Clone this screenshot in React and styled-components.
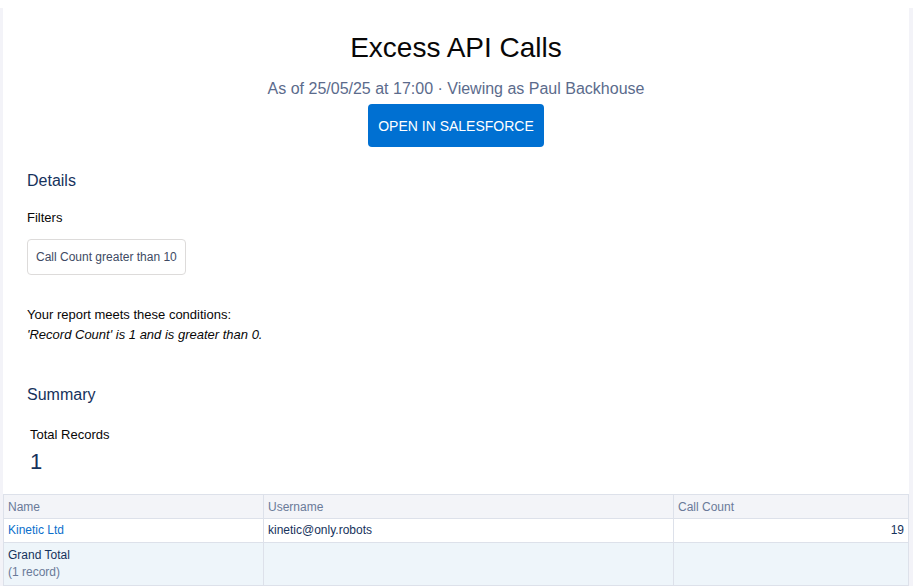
import React from 'react';
import styled, { createGlobalStyle } from 'styled-components';

const GlobalStyle = createGlobalStyle`
  html, body {
    margin: 0;
    padding: 0;
    background: #ffffff;
    font-family: "Liberation Sans", Arial, sans-serif;
  }
`;

const Page = styled.div`
  margin-top: 8px;
  background: #f3f3f8;
  padding: 0 4px 0 3px;
`;

const Card = styled.div`
  background: #ffffff;
  padding-top: 22px;
`;

const Header = styled.div`
  display: flex;
  flex-direction: column;
  align-items: center;
`;

const Title = styled.h1`
  margin: 0;
  font-size: 28px;
  font-weight: 400;
  color: #080707;
  line-height: 36px;
`;

const Subtitle = styled.div`
  margin-top: 13px;
  font-size: 16px;
  color: #5b6b8c;
  line-height: 20px;
`;

const Button = styled.a`
  margin-top: 5px;
  display: flex;
  align-items: center;
  justify-content: center;
  width: 176px;
  height: 43px;
  border-radius: 4px;
  background: #0070d2;
  color: #ffffff;
  font-size: 14px;
  text-transform: uppercase;
  text-decoration: none;
`;

const Section = styled.div`
  padding: 0 24px;
`;

const SectionTitle = styled.h2`
  margin: ${(p) => p.$top} 0 0 0;
  font-size: 16px;
  font-weight: 400;
  color: #16325c;
  line-height: 20px;
`;

const Label = styled.div`
  margin-top: 19px;
  font-size: 13px;
  color: #080707;
`;

const FilterBox = styled.div`
  display: inline-block;
  margin-top: 14px;
  padding: 10px 8px 10px;
  border: 1px solid #dddbda;
  border-radius: 4px;
  font-size: 12px;
  color: #3e4a63;
  line-height: 14px;
`;

const Conditions = styled.div`
  margin-top: 30px;
  font-size: 13px;
  color: #080707;
  line-height: 20px;

  em {
    display: block;
  }
`;

const Stat = styled.div`
  padding: 0 3px;
  margin-top: 22px;
`;

const StatLabel = styled.div`
  font-size: 13px;
  color: #080707;
  line-height: 16px;
`;

const StatValue = styled.div`
  margin-top: 6px;
  font-size: 22px;
  color: #16325c;
  line-height: 26px;
`;

const Table = styled.table`
  margin-top: 19px;
  width: 100%;
  border-collapse: collapse;
  font-size: 12px;
  border: 1px solid #dde1ea;
`;

const Th = styled.th`
  text-align: left;
  font-weight: 400;
  color: #6a7a99;
  background: #f3f4f8;
  padding: 0 4px;
  height: 23px;
  border: 1px solid #dde1ea;
`;

const Td = styled.td`
  padding: ${(p) => (p.$tall ? '4px' : '0 4px')};
  height: ${(p) => (p.$tall ? '33px' : '23px')};
  border: 1px solid #dde1ea;
  color: #16325c;
  text-align: ${(p) => (p.$right ? 'right' : 'left')};
  vertical-align: ${(p) => (p.$tall ? 'top' : 'middle')};
  line-height: 17px;
`;

const Row = styled.tr`
  background: ${(p) => (p.$total ? '#eef5fa' : '#ffffff')};
`;

const Link = styled.a`
  color: #0b6fcc;
  text-decoration: none;
`;

const Muted = styled.div`
  color: #6a7a99;
`;

export default function App() {
  return (
    <>
      <GlobalStyle />
      <Page>
        <Card>
          <Header>
            <Title>Excess API Calls</Title>
            <Subtitle>As of 25/05/25 at 17:00 · Viewing as Paul Backhouse</Subtitle>
            <Button href="#">Open in Salesforce</Button>
          </Header>
          <Section>
            <SectionTitle $top="24px">Details</SectionTitle>
            <Label>Filters</Label>
            <FilterBox>Call Count greater than 10</FilterBox>
            <Conditions>
              Your report meets these conditions:
              <em>'Record Count' is 1 and is greater than 0.</em>
            </Conditions>
            <SectionTitle $top="40px">Summary</SectionTitle>
            <Stat>
              <StatLabel>Total Records</StatLabel>
              <StatValue>1</StatValue>
            </Stat>
          </Section>
          <Table>
            <colgroup>
              <col style={{ width: '260px' }} />
              <col style={{ width: '410px' }} />
              <col />
            </colgroup>
            <thead>
              <tr>
                <Th>Name</Th>
                <Th>Username</Th>
                <Th>Call Count</Th>
              </tr>
            </thead>
            <tbody>
              <Row>
                <Td><Link href="#">Kinetic Ltd</Link></Td>
                <Td>kinetic@only.robots</Td>
                <Td $right>19</Td>
              </Row>
              <Row $total>
                <Td $tall>
                  Grand Total
                  <Muted>(1 record)</Muted>
                </Td>
                <Td $tall />
                <Td $tall />
              </Row>
            </tbody>
          </Table>
        </Card>
      </Page>
    </>
  );
}
